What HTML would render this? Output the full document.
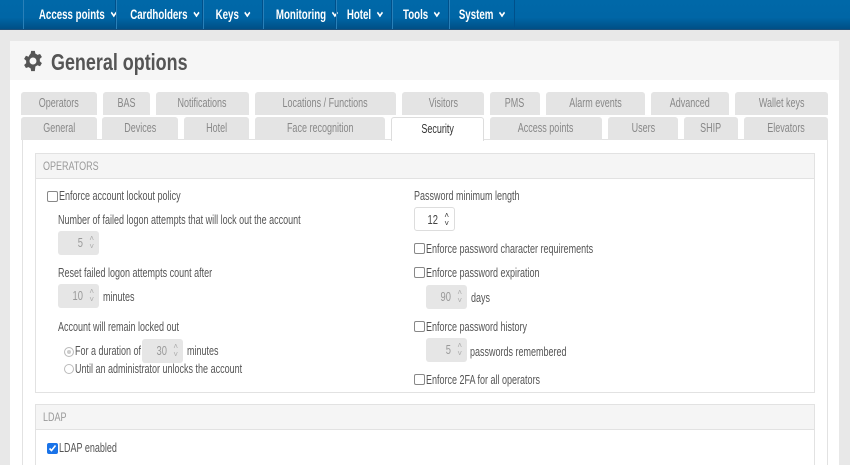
<!DOCTYPE html>
<html><head><style>
*{box-sizing:border-box;margin:0;padding:0}
html,body{width:850px;height:465px;overflow:hidden}
body{background:#e8e8e8;font-family:"Liberation Sans",sans-serif;color:#444;position:relative;font-size:12px}
.nav{position:absolute;left:0;top:0;width:850px;height:30px;background:linear-gradient(#0068a8 0%,#0066a6 60%,#004f86 100%);border-bottom:1px solid #1d4f7a}
.ni{position:absolute;top:0;height:29px;line-height:29px;color:#fff;font-weight:bold;font-size:13.5px;text-align:center;border-left:1px solid #2a80b8;border-right:1px solid #00508a;white-space:nowrap}
.ni span{display:inline-block;transform:scaleX(.72)}
.ni span:after{content:"";display:inline-block;width:4px;height:4px;border-right:2px solid #fff;border-bottom:2px solid #fff;transform:rotate(45deg);margin-left:9px;vertical-align:3px}
.a{position:absolute}
.card{left:10px;top:41px;width:829px;height:430px;background:#fff}
.hdr{left:10px;top:41px;width:829px;height:39px;background:#f6f6f6}
h1{position:absolute;left:51px;top:49px;font-size:23px;font-weight:bold;color:#555;transform:scaleX(.78);transform-origin:left;white-space:nowrap}
.tab{position:absolute;height:23px;line-height:23px;background:#e4e4e4;color:#888;font-size:12.5px;text-align:center;border-radius:3px 3px 0 0;white-space:nowrap}
.tab span{display:inline-block;transform:scaleX(.72)}
.tab.act{background:#fff;color:#333;border:1px solid #ddd;border-bottom:none;height:24px}
.pane{left:22px;top:139px;width:806px;height:340px;border:1px solid #e2e2e2;background:#fff}
.box{position:absolute;left:35px;width:780px;border:1px solid #e2e2e2;background:#fff}
.bh{height:25px;line-height:25px;background:#f5f5f5;border-bottom:1px solid #e2e2e2;padding-left:7px;color:#999;font-size:12px}
.bh span{display:inline-block;transform:scaleX(.75);transform-origin:left}
.t{position:absolute;font-size:12.5px;color:#555;white-space:nowrap;transform:scaleX(.72);transform-origin:left}
.cb{position:absolute;width:11px;height:11px;border:1px solid #888;border-radius:2px;background:#fff}
.rb{position:absolute;width:10px;height:10px;border:1px solid #bbb;border-radius:50%;background:#fff}
.sp{position:absolute;height:24px;width:41px;border-radius:3px;background:#e6e6e6;text-align:right;padding-right:16px;line-height:24px;color:#999;font-size:12.5px}
.sp span{display:inline-block;transform:scaleX(.75);transform-origin:right}
.sp.en{background:#fff;border:1px solid #ddd;color:#444}
.sp:after{content:"\2C4\A\2C5";white-space:pre;position:absolute;right:5px;top:4px;font-size:8px;line-height:8px;color:#aaa}
.sp.en:after{color:#333}
</style></head><body>
<div class="nav">
<div class="ni" style="left:23px;width:93px"><span>Access points</span></div>
<div class="ni" style="left:116px;width:87px"><span>Cardholders</span></div>
<div class="ni" style="left:203px;width:60px"><span>Keys</span></div>
<div class="ni" style="left:263px;width:73px"><span>Monitoring</span></div>
<div class="ni" style="left:336px;width:56px"><span>Hotel</span></div>
<div class="ni" style="left:392px;width:57px"><span>Tools</span></div>
<div class="ni" style="left:449px;width:66px"><span>System</span></div>
</div>
<div class="a card"></div>
<div class="a hdr"></div>
<svg class="a" style="left:22px;top:50px" width="22" height="22" viewBox="0 0 24 24"><path fill="#555" fill-rule="evenodd" d="M10 1h4l.6 3a8 8 0 0 1 2.2 1.3l2.9-1 2 3.4-2.3 2a8 8 0 0 1 0 2.6l2.3 2-2 3.4-2.9-1a8 8 0 0 1-2.2 1.3L14 23h-4l-.6-3a8 8 0 0 1-2.2-1.3l-2.9 1-2-3.4 2.3-2a8 8 0 0 1 0-2.6l-2.3-2 2-3.4 2.9 1A8 8 0 0 1 9.4 4zM12 8.2a3.8 3.8 0 1 0 0 7.6 3.8 3.8 0 0 0 0-7.6z"/></svg>
<h1>General options</h1>
<div class="a pane"></div>
<div class="tab" style="left:21px;top:92px;width:76px"><span>Operators</span></div>
<div class="tab" style="left:103px;top:92px;width:47px"><span>BAS</span></div>
<div class="tab" style="left:156px;top:92px;width:93px"><span>Notifications</span></div>
<div class="tab" style="left:255px;top:92px;width:141px"><span>Locations / Functions</span></div>
<div class="tab" style="left:402px;top:92px;width:82px"><span>Visitors</span></div>
<div class="tab" style="left:490px;top:92px;width:50px"><span>PMS</span></div>
<div class="tab" style="left:546px;top:92px;width:99px"><span>Alarm events</span></div>
<div class="tab" style="left:651px;top:92px;width:78px"><span>Advanced</span></div>
<div class="tab" style="left:735px;top:92px;width:93px"><span>Wallet keys</span></div>
<div class="tab" style="left:21px;top:117px;width:76px"><span>General</span></div>
<div class="tab" style="left:102px;top:117px;width:76px"><span>Devices</span></div>
<div class="tab" style="left:184px;top:117px;width:65px"><span>Hotel</span></div>
<div class="tab" style="left:255px;top:117px;width:130px"><span>Face recognition</span></div>
<div class="tab act" style="left:391px;top:117px;width:93px"><span>Security</span></div>
<div class="tab" style="left:490px;top:117px;width:112px"><span>Access points</span></div>
<div class="tab" style="left:608px;top:117px;width:70px"><span>Users</span></div>
<div class="tab" style="left:684px;top:117px;width:54px"><span>SHIP</span></div>
<div class="tab" style="left:744px;top:117px;width:84px"><span>Elevators</span></div>

<div class="box" style="top:153px;height:240px"><div class="bh"><span>OPERATORS</span></div></div>
<div class="cb" style="left:47px;top:191px"></div><div class="t" style="left:59px;top:189px">Enforce account lockout policy</div>
<div class="t" style="left:58px;top:213px">Number of failed logon attempts that will lock out the account</div>
<div class="sp" style="left:58px;top:231px"><span>5</span></div>
<div class="t" style="left:58px;top:266px">Reset failed logon attempts count after</div>
<div class="sp" style="left:58px;top:284px"><span>10</span></div><div class="t" style="left:103px;top:290px">minutes</div>
<div class="t" style="left:58px;top:320px">Account will remain locked out</div>
<div class="rb" style="left:64px;top:347px;background:#ccc;box-shadow:inset 0 0 0 2px #fff"></div><div class="t" style="left:75px;top:344px">For a duration of</div>
<div class="sp" style="left:142px;top:339px"><span>30</span></div><div class="t" style="left:187px;top:344px">minutes</div>
<div class="rb" style="left:64px;top:364px"></div><div class="t" style="left:75px;top:362px">Until an administrator unlocks the account</div>

<div class="t" style="left:414px;top:189px">Password minimum length</div>
<div class="sp en" style="left:414px;top:207px"><span>12</span></div>
<div class="cb" style="left:414px;top:243px"></div><div class="t" style="left:426px;top:242px">Enforce password character requirements</div>
<div class="cb" style="left:414px;top:267px"></div><div class="t" style="left:426px;top:266px">Enforce password expiration</div>
<div class="sp" style="left:426px;top:285px"><span>90</span></div><div class="t" style="left:471px;top:291px">days</div>
<div class="cb" style="left:414px;top:321px"></div><div class="t" style="left:426px;top:320px">Enforce password history</div>
<div class="sp" style="left:426px;top:338px"><span>5</span></div><div class="t" style="left:470px;top:345px">passwords remembered</div>
<div class="cb" style="left:414px;top:374px"></div><div class="t" style="left:426px;top:373px">Enforce 2FA for all operators</div>

<div class="box" style="top:404px;height:70px"><div class="bh"><span>LDAP</span></div></div>
<div class="cb" style="left:47px;top:443px;background:#1a73e8;border-color:#1a73e8"></div>
<svg class="a" style="left:48px;top:444px" width="9" height="9" viewBox="0 0 9 9"><path d="M1.5 4.5l2 2 4-5" stroke="#fff" stroke-width="1.6" fill="none"/></svg>
<div class="t" style="left:59px;top:441px">LDAP enabled</div>
</body></html>
